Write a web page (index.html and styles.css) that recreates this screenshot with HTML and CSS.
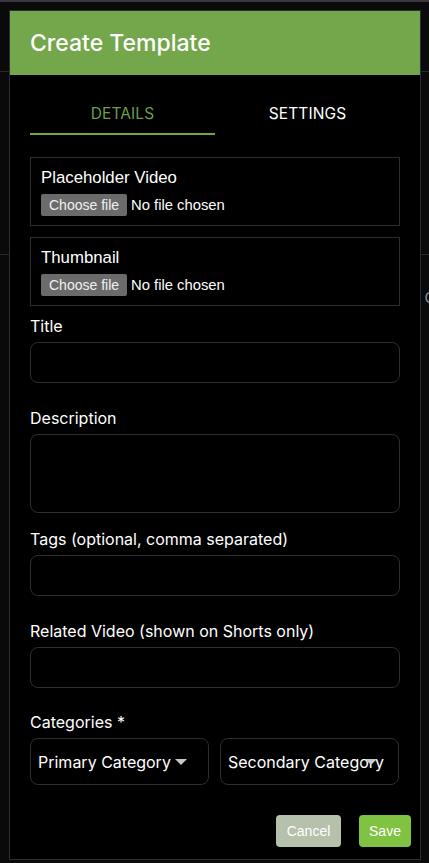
FILE: index.html
```html
<!DOCTYPE html>
<html lang="en">
<head>
<meta charset="utf-8">
<title>Create Template</title>
<link rel="stylesheet" href="styles.css">
</head>
<body>
<div class="page">
  <div class="backdrop">
    <div class="topbar"></div>
    <div class="rule rule-1"></div>
    <div class="rule rule-2"></div>
    <div class="peek">Cl</div>
  </div>

  <div class="modal">
    <div class="modal-header">
      <h1 class="modal-title">Create Template</h1>
    </div>
    <div class="modal-body">
      <div class="tabs">
        <div class="tab tab-active">DETAILS</div>
        <div class="tab">SETTINGS</div>
      </div>

      <div class="file-box">
        <div class="file-label">Placeholder Video</div>
        <div class="file-control"><span class="file-btn">Choose file</span><span class="file-name">No file chosen</span></div>
      </div>
      <div class="file-box">
        <div class="file-label">Thumbnail</div>
        <div class="file-control"><span class="file-btn">Choose file</span><span class="file-name">No file chosen</span></div>
      </div>

      <div class="field field-first">
        <label class="label">Title</label>
        <div class="input"></div>
      </div>
      <div class="field">
        <label class="label">Description</label>
        <div class="input textarea"></div>
      </div>
      <div class="field field-tight">
        <label class="label">Tags (optional, comma separated)</label>
        <div class="input"></div>
      </div>
      <div class="field">
        <label class="label">Related Video (shown on Shorts only)</label>
        <div class="input"></div>
      </div>
      <div class="field field-last">
        <label class="label">Categories *</label>
        <div class="selects">
          <div class="select"><span class="select-text">Primary Category</span><span class="caret"></span></div>
          <div class="select"><span class="select-text">Secondary Category</span><span class="caret"></span></div>
        </div>
      </div>

      <div class="actions">
        <button class="btn btn-cancel">Cancel</button>
        <button class="btn btn-save">Save</button>
      </div>
    </div>
  </div>
</div>
</body>
</html>
```

FILE: styles.css
```css
html, body {
  margin: 0;
  padding: 0;
  background: #0a0a0a;
}
.page {
  position: relative;
  width: 429px;
  height: 863px;
  overflow: hidden;
  font-family: Inter, "Liberation Sans", sans-serif;
  color: #f2f2f2;
}
.backdrop {
  display: flex;
  flex-direction: column;
}
.topbar {
  height: 2px;
  background: #3b3642;
}
.rule {
  height: 1px;
  background: #26292e;
}
.rule-1 { margin-top: 69px; }
.rule-2 { margin-top: 182px; }
.peek {
  margin-top: 33px;
  align-self: flex-end;
  margin-right: -10px;
  font-size: 15px;
  color: #8796a3;
}

.modal {
  position: absolute;
  left: 9px;
  top: 10px;
  width: 410px;
  border: 1px solid #2a2f35;
  background: #000;
}
.modal-header {
  background: #74a64b;
  height: 64px;
  display: flex;
  align-items: center;
  padding: 0 20px;
}
.modal-title {
  margin: 0;
  font-size: 23px;
  font-weight: 500;
  color: #fff;
  letter-spacing: 0;
}
.modal-body {
  padding: 0 9px 12px 20px;
}
.tabs {
  display: flex;
  width: 370px;
  margin-bottom: 22px;
}
.tab {
  flex: 1;
  text-align: center;
  font-size: 15.5px;
  height: 60px;
  line-height: 78px;
  box-sizing: border-box;
  color: #fff;
  letter-spacing: 0.1px;
}
.tab-active {
  color: #6c9f47;
  border-bottom: 2px solid #74a64b;
}

.file-box {
  width: 370px;
  box-sizing: border-box;
  border: 1px solid #2a2f35;
  padding: 10px 10px 9px;
  margin-bottom: 11px;
  font-family: "Liberation Sans", Arial, sans-serif;
}
.file-label {
  font-size: 16.8px;
  line-height: 20px;
  color: #fff;
  margin-bottom: 6px;
}
.file-control {
  display: flex;
  align-items: center;
  font-size: 14px;
  color: #fff;
}
.file-name {
  font-size: 14.8px;
}
.file-btn {
  background: #6b6b6b;
  color: #f0f0f0;
  border-radius: 2px;
  height: 22px;
  line-height: 22px;
  padding: 0 8px;
  margin-right: 4px;
}

.field {
  width: 370px;
  margin-top: 23px;
}
.field-first { margin-top: -3px; }
.field-tight { margin-top: 14px; }
.field-last { margin-top: 22px; }
.label {
  display: block;
  font-size: 16px;
  line-height: 24px;
  color: #fff;
  margin-bottom: 4px;
}
.input {
  height: 39px;
  border: 1px solid #2a2f35;
  border-radius: 8px;
  background: #000;
}
.textarea {
  height: 77px;
}
.selects {
  display: flex;
  gap: 11px;
}
.select {
  position: relative;
  width: 177px;
  height: 45px;
  border: 1px solid #2a2f35;
  border-radius: 8px;
  display: flex;
  align-items: center;
  overflow: hidden;
}
.select-text {
  padding-left: 7px;
  font-size: 16px;
  color: #fff;
  white-space: nowrap;
}
.caret {
  position: absolute;
  right: 21px;
  top: 20px;
  width: 0;
  height: 0;
  border-left: 6px solid transparent;
  border-right: 6px solid transparent;
  border-top: 6px solid #c8c8c8;
}

.actions {
  display: flex;
  justify-content: flex-end;
  gap: 18px;
  margin-top: 30px;
}
.btn {
  border: none;
  border-radius: 4px;
  height: 32px;
  padding: 0 10px;
  font-family: "Liberation Sans", Arial, sans-serif;
  font-size: 14px;
  color: #fff;
}
.btn-cancel {
  background: #b5c1ab;
  width: 65px;
}
.btn-save {
  background: #80c242;
  width: 52px;
}
```
